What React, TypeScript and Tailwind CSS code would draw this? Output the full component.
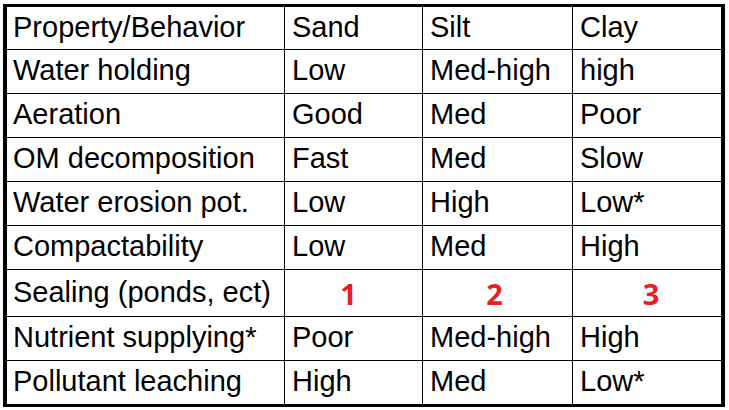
const rows: string[][] = [
  ['Property/Behavior', 'Sand', 'Silt', 'Clay'],
  ['Water holding', 'Low', 'Med-high', 'high'],
  ['Aeration', 'Good', 'Med', 'Poor'],
  ['OM decomposition', 'Fast', 'Med', 'Slow'],
  ['Water erosion pot.', 'Low', 'High', 'Low*'],
  ['Compactability', 'Low', 'Med', 'High'],
  ['Sealing (ponds, ect)', '1', '2', '3'],
  ['Nutrient supplying*', 'Poor', 'Med-high', 'High'],
  ['Pollutant leaching', 'High', 'Med', 'Low*'],
];

const heights = ['h-[43px]', 'h-[44px]', 'h-[44px]', 'h-[44px]', 'h-[44px]', 'h-[44px]', 'h-[47px]', 'h-[44px]', 'h-[43px]'];
const widths = ['w-[278px]', 'w-[138px]', 'w-[150px]', 'w-[148px]'];
const pads = ['pl-[6px]', 'pl-[7px]', 'pl-[7px]', 'pl-[7px]'];
const shifts = ['', 'ml-[-10px]', 'ml-[-6px]', 'ml-[8px]'];

export default function App() {
  return (
    <div className="w-[729px] h-[410px] bg-white pt-[4px] pl-[3px]">
      <div
        className="w-[722px] border-black border-l-4 border-r-4 border-t-[3px] border-b-[3px] text-black"
        style={{ fontFamily: '"Liberation Sans", Arial, sans-serif' }}
      >
        {rows.map((row, r) => (
          <div key={r} className={`flex ${heights[r]} ${r < rows.length - 1 ? 'border-b border-black' : ''}`}>
            {row.map((cell, c) => {
              const sealing = r === 6 && c > 0;
              return (
                <div
                  key={c}
                  className={`${widths[c]} flex items-center pb-[2px] ${c < 3 ? 'border-r border-black' : ''} ${
                    sealing ? 'justify-center' : pads[c]
                  }`}
                >
                  {sealing ? (
                    <span
                      className={`text-[29px] font-bold text-[#ed1c24] pt-[4px] ${shifts[c]}`}
                      style={{ fontFamily: '"Open Sans", sans-serif' }}
                    >
                      {cell}
                    </span>
                  ) : (
                    <span className="text-[29px] leading-none whitespace-nowrap">{cell}</span>
                  )}
                </div>
              );
            })}
          </div>
        ))}
      </div>
    </div>
  );
}
